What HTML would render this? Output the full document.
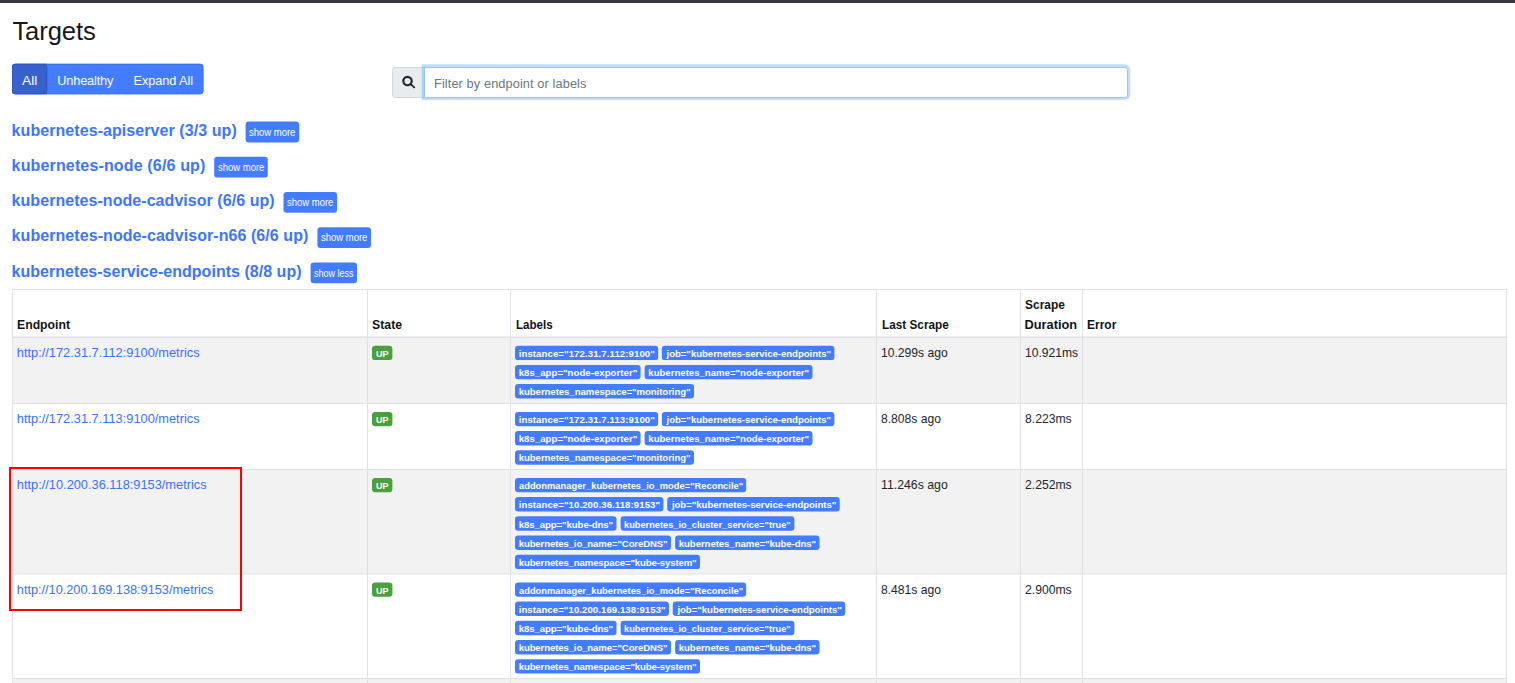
<!DOCTYPE html>
<html lang="en">
<head>
<meta charset="utf-8">
<title>Prometheus Time Series Collection and Processing Server</title>
<style>
html,body{margin:0;padding:0;background:#fff;}
body{width:1515px;height:683px;overflow:hidden;position:relative;font-family:"Liberation Sans",sans-serif;font-size:12.8px;color:#212529;}
.abs{position:absolute;}
.t{position:absolute;white-space:nowrap;line-height:1;transform-origin:0 0;z-index:2;}
.h2{font-size:25.6px;font-weight:400;color:#16181b;}
.btn{color:#fff;}
.ph{color:#6c757d;}
.pool{font-size:16px;font-weight:700;color:#3d75ff;}
.sm{font-size:10.4px;color:#fff;}
.th{font-weight:700;color:#111417;}
.lnk{color:#3a71fc;}
.td{color:#212529;}
.bd{font-size:9.6px;font-weight:700;color:#fff;}
.box{position:absolute;box-sizing:border-box;}
.bg{background:#447cff;border-radius:3.2px;}
.up{background:#4aa03c;border-radius:3.2px;}
.vl{position:absolute;width:1px;background:#dee2e6;top:289px;height:394px;}
.hl{position:absolute;height:1px;background:#dee2e6;left:12px;width:1495px;}
.stripe{position:absolute;left:13px;width:1493px;background:#f2f2f2;}
</style>
</head>
<body>
<div class="box" style="left:0;top:0;width:1515px;height:3px;background:#343a40;"></div>
<span id="title" class="t h2" style="left:12.40px;top:19.00px;letter-spacing:-0.089px;">Targets</span>
<span id="b1" class="t btn" style="left:22.20px;top:75.00px;transform:scaleX(1.0764);">All</span>
<span id="b2" class="t btn" style="left:57.20px;top:75.00px;letter-spacing:-0.178px;">Unhealthy</span>
<span id="b3" class="t btn" style="left:133.50px;top:75.00px;letter-spacing:-0.104px;">Expand All</span>
<div class="box" style="left:392px;top:67px;width:33px;height:30.6px;background:#e9ecef;border:1px solid #d3d8dd;border-radius:3.2px 0 0 3.2px;"></div>
<svg class="abs" style="left:400px;top:74px;" width="18" height="17" viewBox="0 0 18 17"><circle cx="7.5" cy="7.05" r="4.2" fill="none" stroke="#212529" stroke-width="2.15"/><path d="M10.6 10.1 L14.2 13.35" stroke="#212529" stroke-width="1.9" stroke-linecap="round" fill="none"/></svg>
<div class="box" style="left:424px;top:67px;width:704px;height:30.6px;background:#fff;border:1px solid #95c6ff;border-radius:0 3.2px 3.2px 0;box-shadow:0 -0.4px 0 2.3px rgba(0,123,255,.25);"></div>
<span id="ph" class="t ph" style="left:434.00px;top:78.00px;letter-spacing:0.086px;">Filter by endpoint or labels</span>
<svg class="abs" style="left:0;top:0;z-index:1;" width="1515" height="683" viewBox="0 0 1515 683"><clipPath id="bgc"><rect x="12" y="63.85" width="191.4" height="30.4" rx="3.2"/></clipPath><rect x="12" y="63.85" width="191.4" height="30.4" rx="3.2" fill="#447cff" stroke="none"/><rect x="12.5" y="64.35" width="190.4" height="29.4" rx="2.8" fill="none" stroke="#3a72fb" stroke-width="1"/><g clip-path="url(#bgc)"><rect x="11" y="63" width="35.8" height="32" fill="#3762ce"/><rect x="12.5" y="64.35" width="34.3" height="29.4" rx="2.8" fill="none" stroke="#3058c4" stroke-width="1"/></g><rect x="245.60" y="121.60" width="53.60" height="20.80" rx="3.2" fill="#447cff"/><rect x="214.20" y="156.80" width="53.60" height="20.80" rx="3.2" fill="#447cff"/><rect x="283.50" y="192.00" width="53.60" height="20.80" rx="3.2" fill="#447cff"/><rect x="317.40" y="227.20" width="53.60" height="20.80" rx="3.2" fill="#447cff"/><rect x="310.60" y="262.40" width="46.40" height="20.80" rx="3.2" fill="#447cff"/><rect x="372.00" y="345.70" width="20.40" height="14.40" rx="3.2" fill="#4aa03c"/><rect x="515.00" y="345.70" width="143.20" height="14.40" rx="3.2" fill="#447cff"/><rect x="661.80" y="345.70" width="172.60" height="14.40" rx="3.2" fill="#447cff"/><rect x="515.00" y="364.90" width="125.60" height="14.40" rx="3.2" fill="#447cff"/><rect x="644.60" y="364.90" width="167.90" height="14.40" rx="3.2" fill="#447cff"/><rect x="515.00" y="384.10" width="179.00" height="14.40" rx="3.2" fill="#447cff"/><rect x="372.00" y="411.90" width="20.40" height="14.40" rx="3.2" fill="#4aa03c"/><rect x="515.00" y="411.90" width="143.20" height="14.40" rx="3.2" fill="#447cff"/><rect x="661.80" y="411.90" width="172.60" height="14.40" rx="3.2" fill="#447cff"/><rect x="515.00" y="431.10" width="125.60" height="14.40" rx="3.2" fill="#447cff"/><rect x="644.60" y="431.10" width="167.90" height="14.40" rx="3.2" fill="#447cff"/><rect x="515.00" y="450.30" width="179.00" height="14.40" rx="3.2" fill="#447cff"/><rect x="372.00" y="477.90" width="20.40" height="14.40" rx="3.2" fill="#4aa03c"/><rect x="515.00" y="477.90" width="231.20" height="14.40" rx="3.2" fill="#447cff"/><rect x="515.00" y="497.10" width="148.40" height="14.40" rx="3.2" fill="#447cff"/><rect x="667.20" y="497.10" width="172.50" height="14.40" rx="3.2" fill="#447cff"/><rect x="515.00" y="516.30" width="101.50" height="14.40" rx="3.2" fill="#447cff"/><rect x="620.60" y="516.30" width="173.80" height="14.40" rx="3.2" fill="#447cff"/><rect x="515.00" y="535.50" width="156.00" height="14.40" rx="3.2" fill="#447cff"/><rect x="675.10" y="535.50" width="144.40" height="14.40" rx="3.2" fill="#447cff"/><rect x="515.00" y="554.70" width="185.00" height="14.40" rx="3.2" fill="#447cff"/><rect x="372.00" y="582.40" width="20.40" height="14.40" rx="3.2" fill="#4aa03c"/><rect x="515.00" y="582.40" width="231.20" height="14.40" rx="3.2" fill="#447cff"/><rect x="515.00" y="601.60" width="154.00" height="14.40" rx="3.2" fill="#447cff"/><rect x="672.70" y="601.60" width="172.50" height="14.40" rx="3.2" fill="#447cff"/><rect x="515.00" y="620.80" width="101.50" height="14.40" rx="3.2" fill="#447cff"/><rect x="620.60" y="620.80" width="173.80" height="14.40" rx="3.2" fill="#447cff"/><rect x="515.00" y="640.00" width="156.00" height="14.40" rx="3.2" fill="#447cff"/><rect x="675.10" y="640.00" width="144.40" height="14.40" rx="3.2" fill="#447cff"/><rect x="515.00" y="659.20" width="185.00" height="14.40" rx="3.2" fill="#447cff"/></svg>
<span id="p0" class="t pool" style="left:11.60px;top:123.00px;letter-spacing:0.069px;">kubernetes-apiserver (3/3 up)</span>
<span id="s0" class="t sm" style="left:249.20px;top:128.00px;transform:scaleX(0.9130);">show more</span>
<span id="p1" class="t pool" style="left:11.60px;top:158.00px;letter-spacing:0.151px;">kubernetes-node (6/6 up)</span>
<span id="s1" class="t sm" style="left:217.80px;top:163.00px;transform:scaleX(0.9130);">show more</span>
<span id="p2" class="t pool" style="left:11.60px;top:193.00px;letter-spacing:0.051px;">kubernetes-node-cadvisor (6/6 up)</span>
<span id="s2" class="t sm" style="left:287.10px;top:198.00px;transform:scaleX(0.9130);">show more</span>
<span id="p3" class="t pool" style="left:11.60px;top:228.00px;letter-spacing:0.068px;">kubernetes-node-cadvisor-n66 (6/6 up)</span>
<span id="s3" class="t sm" style="left:321.00px;top:233.00px;transform:scaleX(0.9130);">show more</span>
<span id="p4" class="t pool" style="left:11.60px;top:264.00px;letter-spacing:0.027px;">kubernetes-service-endpoints (8/8 up)</span>
<span id="s4" class="t sm" style="left:314.20px;top:269.00px;transform:scaleX(0.8673);">show less</span>
<div class="stripe" style="top:338px;height:65px;"></div>
<div class="stripe" style="top:470px;height:104px;"></div>
<div class="stripe" style="top:679px;height:21px;"></div>
<div class="hl" style="top:289px;"></div>
<div class="hl" style="top:336px;height:2px;background:linear-gradient(#eef0f2,#eef0f2 1px,#dee2e6 1px);"></div>
<div class="hl" style="top:573px;height:2px;background:linear-gradient(#e8eaec,#e8eaec 1px,#eef0f2 1px);"></div>
<div class="hl" style="top:403px;"></div>
<div class="hl" style="top:469px;"></div>
<div class="hl" style="top:678px;"></div>
<div class="vl" style="left:12px;"></div>
<div class="vl" style="left:367px;"></div>
<div class="vl" style="left:510px;"></div>
<div class="vl" style="left:876px;"></div>
<div class="vl" style="left:1020px;"></div>
<div class="vl" style="left:1082px;"></div>
<div class="vl" style="left:1506px;"></div>
<span id="h0" class="t th" style="left:17.20px;top:319.00px;transform:scaleX(0.9559);">Endpoint</span>
<span id="h1" class="t th" style="left:372.30px;top:319.00px;transform:scaleX(0.9623);">State</span>
<span id="h2" class="t th" style="left:515.50px;top:319.00px;transform:scaleX(0.9054);">Labels</span>
<span id="h3" class="t th" style="left:881.60px;top:319.00px;transform:scaleX(0.9208);">Last Scrape</span>
<span id="h4a" class="t th" style="left:1024.60px;top:299.00px;transform:scaleX(0.9350);">Scrape</span>
<span id="h4b" class="t th" style="left:1024.60px;top:319.00px;letter-spacing:-0.027px;">Duration</span>
<span id="h5" class="t th" style="left:1087.40px;top:319.00px;transform:scaleX(0.9389);">Error</span>
<span id="u0" class="t lnk" style="left:16.80px;top:347.00px;letter-spacing:0.007px;">http://172.31.7.112:9100/metrics</span>
<span id="up0" class="t bd" style="left:376.00px;top:349.00px;transform:scaleX(0.9334);">UP</span>
<span id="l0_0_0" class="t bd" style="left:518.70px;top:349.00px;letter-spacing:0.093px;">instance="172.31.7.112:9100"</span>
<span id="l0_0_1" class="t bd" style="left:666.50px;top:349.00px;letter-spacing:-0.031px;">job="kubernetes-service-endpoints"</span>
<span id="l0_1_0" class="t bd" style="left:518.70px;top:368.00px;letter-spacing:0.043px;">k8s_app="node-exporter"</span>
<span id="l0_1_1" class="t bd" style="left:648.30px;top:368.00px;letter-spacing:0.002px;">kubernetes_name="node-exporter"</span>
<span id="l0_2_0" class="t bd" style="left:518.70px;top:387.00px;letter-spacing:-0.051px;">kubernetes_namespace="monitoring"</span>
<span id="ls0" class="t td" style="left:881.40px;top:347.00px;transform:scaleX(0.9470);">10.299s ago</span>
<span id="du0" class="t td" style="left:1025.00px;top:347.00px;transform:scaleX(0.9426);">10.921ms</span>
<span id="u1" class="t lnk" style="left:16.80px;top:413.00px;letter-spacing:0.007px;">http://172.31.7.113:9100/metrics</span>
<span id="up1" class="t bd" style="left:376.00px;top:415.00px;transform:scaleX(0.9334);">UP</span>
<span id="l1_0_0" class="t bd" style="left:518.70px;top:415.00px;letter-spacing:0.093px;">instance="172.31.7.113:9100"</span>
<span id="l1_0_1" class="t bd" style="left:666.50px;top:415.00px;letter-spacing:-0.031px;">job="kubernetes-service-endpoints"</span>
<span id="l1_1_0" class="t bd" style="left:518.70px;top:434.00px;letter-spacing:0.043px;">k8s_app="node-exporter"</span>
<span id="l1_1_1" class="t bd" style="left:648.30px;top:434.00px;letter-spacing:0.002px;">kubernetes_name="node-exporter"</span>
<span id="l1_2_0" class="t bd" style="left:518.70px;top:453.00px;letter-spacing:-0.051px;">kubernetes_namespace="monitoring"</span>
<span id="ls1" class="t td" style="left:881.40px;top:413.00px;transform:scaleX(0.9476);">8.808s ago</span>
<span id="du1" class="t td" style="left:1024.80px;top:413.00px;transform:scaleX(0.9510);">8.223ms</span>
<span id="u2" class="t lnk" style="left:16.80px;top:479.00px;letter-spacing:0.003px;">http://10.200.36.118:9153/metrics</span>
<span id="up2" class="t bd" style="left:376.00px;top:481.00px;transform:scaleX(0.9334);">UP</span>
<span id="l2_0_0" class="t bd" style="left:518.70px;top:481.00px;transform:scaleX(0.9741);">addonmanager_kubernetes_io_mode="Reconcile"</span>
<span id="l2_1_0" class="t bd" style="left:518.70px;top:500.00px;letter-spacing:0.085px;">instance="10.200.36.118:9153"</span>
<span id="l2_1_1" class="t bd" style="left:671.90px;top:500.00px;letter-spacing:-0.034px;">job="kubernetes-service-endpoints"</span>
<span id="l2_2_0" class="t bd" style="left:518.70px;top:520.00px;letter-spacing:-0.076px;">k8s_app="kube-dns"</span>
<span id="l2_2_1" class="t bd" style="left:624.30px;top:520.00px;transform:scaleX(0.9633);">kubernetes_io_cluster_service="true"</span>
<span id="l2_3_0" class="t bd" style="left:518.70px;top:539.00px;letter-spacing:-0.123px;">kubernetes_io_name="CoreDNS"</span>
<span id="l2_3_1" class="t bd" style="left:678.80px;top:539.00px;letter-spacing:-0.063px;">kubernetes_name="kube-dns"</span>
<span id="l2_4_0" class="t bd" style="left:518.70px;top:558.00px;letter-spacing:-0.127px;">kubernetes_namespace="kube-system"</span>
<span id="ls2" class="t td" style="left:881.40px;top:479.00px;transform:scaleX(0.9600);">11.246s ago</span>
<span id="du2" class="t td" style="left:1024.80px;top:479.00px;transform:scaleX(0.9510);">2.252ms</span>
<span id="u3" class="t lnk" style="left:16.80px;top:584.00px;letter-spacing:-0.033px;">http://10.200.169.138:9153/metrics</span>
<span id="up3" class="t bd" style="left:376.00px;top:586.00px;transform:scaleX(0.9334);">UP</span>
<span id="l3_0_0" class="t bd" style="left:518.70px;top:586.00px;transform:scaleX(0.9741);">addonmanager_kubernetes_io_mode="Reconcile"</span>
<span id="l3_1_0" class="t bd" style="left:518.70px;top:605.00px;letter-spacing:0.072px;">instance="10.200.169.138:9153"</span>
<span id="l3_1_1" class="t bd" style="left:677.40px;top:605.00px;letter-spacing:-0.034px;">job="kubernetes-service-endpoints"</span>
<span id="l3_2_0" class="t bd" style="left:518.70px;top:624.00px;letter-spacing:-0.076px;">k8s_app="kube-dns"</span>
<span id="l3_2_1" class="t bd" style="left:624.30px;top:624.00px;transform:scaleX(0.9633);">kubernetes_io_cluster_service="true"</span>
<span id="l3_3_0" class="t bd" style="left:518.70px;top:643.00px;letter-spacing:-0.123px;">kubernetes_io_name="CoreDNS"</span>
<span id="l3_3_1" class="t bd" style="left:678.80px;top:643.00px;letter-spacing:-0.063px;">kubernetes_name="kube-dns"</span>
<span id="l3_4_0" class="t bd" style="left:518.70px;top:662.00px;letter-spacing:-0.127px;">kubernetes_namespace="kube-system"</span>
<span id="ls3" class="t td" style="left:881.40px;top:584.00px;transform:scaleX(0.9476);">8.481s ago</span>
<span id="du3" class="t td" style="left:1024.80px;top:584.00px;transform:scaleX(0.9510);">2.900ms</span>
<div class="box" style="left:9px;top:467px;width:233px;height:144px;border:2px solid #ff0000;z-index:3;"></div>
</body>
</html>
